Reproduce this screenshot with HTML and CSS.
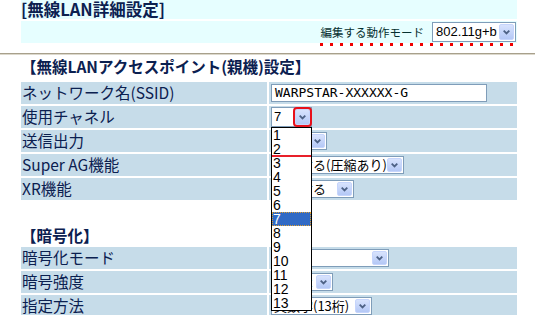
FILE: index.html
```html
<!DOCTYPE html>
<html lang="ja">
<head>
    <meta charset="UTF-8" />
    <title>無線LAN詳細設定</title>
    <link rel="stylesheet" href="styles.css">
</head>
<body>
    <div class="head">
        <div class="band top">
            <h1 class="ttl">[無線LAN詳細設定]</h1>
        </div>
        <div class="band mode">
            <span class="mode-lbl">編集する動作モード</span>
            <div class="sel mode-sel">
                <span class="val lat">802.11g+b</span>
                <span class="btn"><svg width="7" height="5" viewBox="0 0 7 5"><polyline points="0.7,0.7 3.5,3.5 6.3,0.7" fill="none" stroke="#4d6185" stroke-width="1.8"/></svg></span>
            </div>
        </div>
        <div class="dots"></div>
    </div>
    <div class="rule"></div>

    <div class="sec">
        <h2 class="ttl">【無線LANアクセスポイント(親機)設定】</h2>
        <div class="form">
            <div class="lbl">ネットワーク名(SSID)</div>
            <div class="fld"><div class="inp">WARPSTAR-XXXXXX-G</div></div>

            <div class="lbl">使用チャネル</div>
            <div class="fld">
                <div class="sel ch">
                    <span class="val lat">7</span>
                    <span class="btn hot"><svg width="7" height="5" viewBox="0 0 7 5"><polyline points="0.7,0.7 3.5,3.5 6.3,0.7" fill="none" stroke="#4d6185" stroke-width="1.8"/></svg></span>
                    <ul class="list">
                        <li>1</li>
                        <li class="mark">2</li>
                        <li>3</li>
                        <li>4</li>
                        <li>5</li>
                        <li>6</li>
                        <li class="on">7</li>
                        <li>8</li>
                        <li>9</li>
                        <li>10</li>
                        <li>11</li>
                        <li>12</li>
                        <li>13</li>
                    </ul>
                </div>
            </div>

            <div class="lbl">送信出力</div>
            <div class="fld">
                <div class="sel w-pow">
                    <span class="val">100%</span>
                    <span class="btn"><svg width="7" height="5" viewBox="0 0 7 5"><polyline points="0.7,0.7 3.5,3.5 6.3,0.7" fill="none" stroke="#4d6185" stroke-width="1.8"/></svg></span>
                </div>
            </div>

            <div class="lbl">Super AG機能</div>
            <div class="fld">
                <div class="sel w-ag">
                    <span class="val">使用する(圧縮あり)</span>
                    <span class="btn"><svg width="7" height="5" viewBox="0 0 7 5"><polyline points="0.7,0.7 3.5,3.5 6.3,0.7" fill="none" stroke="#4d6185" stroke-width="1.8"/></svg></span>
                </div>
            </div>

            <div class="lbl">XR機能</div>
            <div class="fld">
                <div class="sel w-xr">
                    <span class="val">使用する</span>
                    <span class="btn"><svg width="7" height="5" viewBox="0 0 7 5"><polyline points="0.7,0.7 3.5,3.5 6.3,0.7" fill="none" stroke="#4d6185" stroke-width="1.8"/></svg></span>
                </div>
            </div>
        </div>

        <h2 class="ttl sub">【暗号化】</h2>
        <div class="form">
            <div class="lbl">暗号化モード</div>
            <div class="fld">
                <div class="sel w-enc">
                    <span class="val">WEP</span>
                    <span class="btn"><svg width="7" height="5" viewBox="0 0 7 5"><polyline points="0.7,0.7 3.5,3.5 6.3,0.7" fill="none" stroke="#4d6185" stroke-width="1.8"/></svg></span>
                </div>
            </div>

            <div class="lbl">暗号強度</div>
            <div class="fld">
                <div class="sel w-str">
                    <span class="val">128bit</span>
                    <span class="btn"><svg width="7" height="5" viewBox="0 0 7 5"><polyline points="0.7,0.7 3.5,3.5 6.3,0.7" fill="none" stroke="#4d6185" stroke-width="1.8"/></svg></span>
                </div>
            </div>

            <div class="lbl">指定方法</div>
            <div class="fld">
                <div class="sel w-key">
                    <span class="val">英数字(13桁)</span>
                    <span class="btn"><svg width="7" height="5" viewBox="0 0 7 5"><polyline points="0.7,0.7 3.5,3.5 6.3,0.7" fill="none" stroke="#4d6185" stroke-width="1.8"/></svg></span>
                </div>
            </div>
        </div>
    </div>
</body>
</html>
```

FILE: styles.css
```css
body {
    margin: 0;
    font-family: "Noto Sans CJK JP", sans-serif;
    color: #0b2050;
    background: #fff;
}

.head {
    margin-left: 21px;
    width: 496px;
}
.band {
    background-color: #e6feff;
}
.top {
    height: 19px;
}
.ttl {
    margin: 0;
    font-size: 16.5px;
    font-weight: bold;
    line-height: 19px;
    color: #0b2050;
}
.mode {
    margin-top: 2px;
    height: 22px;
    display: flex;
    justify-content: flex-end;
    align-items: center;
    padding-right: 1px;
}
.mode-lbl {
    font-size: 11.5px;
    color: #063030;
    margin-right: 8px;
    line-height: 22px;
}
.dots {
    margin-left: 299px;
    width: 193px;
    height: 3px;
    background: repeating-linear-gradient(to right, #f00000 0 3px, transparent 3px 10px);
}
.rule {
    margin-top: 7px;
    height: 1px;
    border-top: 1px solid #a8a08c;
    background: #dcd8cc;
}

.sec {
    margin-left: 21px;
    width: 496px;
}
.sec .ttl {
    margin-top: 2px;
    line-height: 19px;
    font-size: 15.5px;
}
.sec .ttl.sub {
    margin-top: 26px;
}
.form {
    margin-top: 6px;
    display: grid;
    grid-template-columns: 246px 248px;
    grid-auto-rows: 22px;
    gap: 2px;
}
.sec .ttl.sub + .form {
    margin-top: 2px;
}
.lbl {
    background-color: #c6dce9;
    font-size: 15.5px;
    line-height: 20px;
    padding-left: 1px;
    white-space: nowrap;
}
.fld {
    background-color: #c6dce9;
    display: flex;
    align-items: center;
    padding-left: 2px;
}

.inp {
    width: 216px;
    height: 18px;
    box-sizing: border-box;
    border: 1px solid #7f9db9;
    background: #fff;
    font-family: "DejaVu Sans Mono", monospace;
    font-size: 13px;
    line-height: 16px;
    padding-left: 3px;
    color: #000;
}

.sel {
    position: relative;
    display: flex;
    align-items: stretch;
    height: 18px;
    box-sizing: border-box;
    border: 1px solid #7f9db9;
    background: #fff;
    padding: 1px;
    color: #000;
}
.val {
    flex: 1;
    overflow: hidden;
    white-space: nowrap;
    font-size: 13px;
    line-height: 14px;
    padding-left: 1px;
}
.lat {
    font-family: "Liberation Sans", sans-serif;
    font-size: 13px;
}
.btn {
    width: 15px;
    flex: none;
    box-sizing: border-box;
    border: 1px solid #c6d5fc;
    border-radius: 2px;
    background: linear-gradient(#d8e3fd, #b4c8f6);
    display: flex;
    align-items: center;
    justify-content: center;
}
.btn.hot {
    outline: 2px solid #e8101a;
}

.mode-sel {
    width: 84px;
    height: 20px;
}
.mode-sel .val {
    line-height: 16px;
    padding-left: 2px;
}
.ch {
    width: 41px;
    height: 20px;
}
.ch .val {
    line-height: 16px;
}
.w-pow { width: 56px; }
.w-ag { width: 133px; }
.w-xr { width: 83px; }
.w-enc { width: 118px; }
.w-str { width: 62px; }
.w-key { width: 101px; }

/* open drop-down list of the channel select */
.list {
    position: absolute;
    left: -1px;
    top: 19px;
    width: 41px;
    box-sizing: border-box;
    margin: 0;
    padding: 0;
    list-style: none;
    border: 1px solid #000;
    background: #fff;
    z-index: 5;
}
.list li {
    position: relative;
    height: 14px;
    line-height: 14px;
    font-family: "Liberation Sans", sans-serif;
    font-size: 14px;
    padding-left: 1px;
    color: #000;
}
.list li.on {
    background: #316ac5;
    color: #fff;
    outline: 1px dotted #e0a030;
    outline-offset: -1px;
}
.list li.mark::after {
    content: "";
    position: absolute;
    left: 0;
    right: 0;
    bottom: -1px;
    height: 2px;
    background: #e8202a;
}
```
